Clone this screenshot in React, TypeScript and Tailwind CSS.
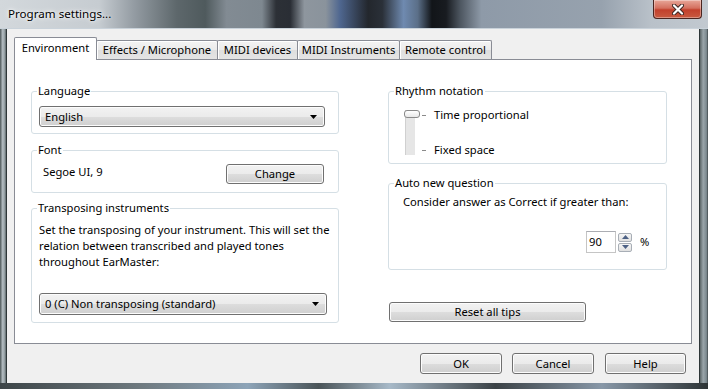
import type { ReactNode } from 'react'

const buttonFace =
  'bg-[linear-gradient(180deg,#f2f2f2_0%,#ebebeb_50%,#dddddd_51%,#cfcfcf_100%)] shadow-[inset_0_0_0_1px_#fcfcfc]'

function WinButton({ label, className }: { label: string; className: string }) {
  return (
    <div
      className={`flex items-center justify-center rounded-[3px] border border-[#707070] leading-[16px] text-black ${buttonFace} ${className}`}
    >
      {label}
    </div>
  )
}

function Combo({ value, className }: { value: string; className: string }) {
  return (
    <div
      className={`flex items-center justify-between rounded-[3px] border border-[#707070] pl-[5px] pr-[7px] leading-[16px] text-black ${buttonFace} ${className}`}
    >
      <span>{value}</span>
      <svg width="7" height="4" viewBox="0 0 7 4">
        <path d="M0 0h7L3.5 4z" fill="#000" />
      </svg>
    </div>
  )
}

function GroupBox({ title, className, children }: { title: string; className: string; children?: ReactNode }) {
  return (
    <div className={`relative rounded-[3px] border border-[#d5dfe5] ${className}`}>
      <span className="absolute left-[5px] top-[-9px] bg-white px-px leading-[16px]">{title}</span>
      {children}
    </div>
  )
}

const tabs = [
  { label: 'Effects / Microphone', width: 'w-[122px]' },
  { label: 'MIDI devices', width: 'w-[81px]' },
  { label: 'MIDI Instruments', width: 'w-[103px]' },
  { label: 'Remote control', width: 'w-[93px]' },
]

export default function App() {
  return (
    <div className="flex h-[389px] w-[708px] flex-col overflow-hidden bg-[linear-gradient(180deg,#7d8a90_0%,#5f6c70_40%,#44524f_70%,#6b7680_100%)] font-['Noto_Sans',sans-serif] text-[11.2px] text-black">
      {/* title bar */}
      <div className="relative flex h-[29px] shrink-0 items-center border-b border-[#c9d2da] bg-[linear-gradient(90deg,#d3d8dc_0%,#c6ccd1_14%,#939ba2_19%,#5d676b_25%,#4f5a5d_29%,#828b93_32%,#7e8890_37%,#2c3036_39%,#2a2e35_41%,#8e969e_43%,#8a939c_46%,#4f6790_48%,#23272d_52%,#2a3038_54%,#6f8ab0_57%,#5b6f88_59%,#121519_61%,#181b20_63%,#4d5660_65%,#8e9aa8_68%,#97a2ae_85%,#b9c1c9_92%,#c2c9d0_100%)] pl-[8px]">
        <span className="relative z-10 text-[11.6px] leading-[16px] text-black [text-shadow:0_0_6px_#ffffff,0_0_3px_#ffffff]">
          Program settings...
        </span>
        <div className="absolute right-[6px] top-0 flex h-[19px] w-[49px] items-center justify-center rounded-b-[4px] border border-t-0 border-[#4a2520] bg-[linear-gradient(180deg,#e8a799_0%,#d4705f_45%,#c2402c_55%,#c85a40_100%)] shadow-[inset_0_0_0_1px_rgba(255,255,255,0.35)]">
          <svg width="12" height="11" viewBox="0 0 12 11">
            <path d="M2 1.5L10 9.5M10 1.5L2 9.5" stroke="#3a2420" strokeWidth="4" strokeLinecap="round" />
            <path d="M2 1.5L10 9.5M10 1.5L2 9.5" stroke="#ffffff" strokeWidth="2.2" strokeLinecap="round" />
          </svg>
        </div>
      </div>

      <div className="flex min-h-0 flex-1">
        <div className="w-[7px] shrink-0 border-r border-[#2e3638] bg-[linear-gradient(90deg,#4b5556_0%,#b6bfc4_45%,#8f9a9e_80%,#5b6567_100%)]" />

        {/* client area */}
        <div className="flex h-[354px] w-[693px] flex-col border-r border-[#2e3638] bg-[#f0f0f0] pl-[7px] pr-[7px] pt-[8px]">
          {/* tab strip */}
          <div className="flex h-[22px] items-end">
            <div className="relative z-10 mb-[-1px] flex h-[23px] w-[83px] justify-center rounded-t-[2px] border border-b-0 border-[#898c95] bg-white pt-[2px] leading-[16px]">
              Environment
            </div>
            {tabs.map((tab) => (
              <div
                key={tab.label}
                className={`-ml-px flex h-[19px] justify-center rounded-t-[2px] border border-b-0 border-[#898c95] bg-[linear-gradient(180deg,#f3f3f3_0%,#ebebeb_50%,#dedede_51%,#e4e4e4_100%)] pt-[1px] leading-[16px] shadow-[inset_0_1px_0_#ffffff,inset_1px_0_0_#ffffff] ${tab.width}`}
              >
                {tab.label}
              </div>
            ))}
          </div>

          {/* tab page */}
          <div className="flex h-[285px] border border-[#898c95] bg-white pl-[16px] pt-[31px]">
            <div className="flex w-[308px] flex-col">
              <GroupBox title="Language" className="h-[43px] pl-[7px] pt-[14px]">
                <Combo value="English" className="h-[21px] w-[286px]" />
              </GroupBox>

              <GroupBox title="Font" className="mt-[16px] flex h-[43px] items-start pl-[11px] pr-[14px] pt-[13px]">
                <span className="leading-[16px]">Segoe UI, 9</span>
                <WinButton label="Change" className="ml-auto h-[20px] w-[98px]" />
              </GroupBox>

              <GroupBox title="Transposing instruments" className="mt-[15px] h-[115px] pl-[7px] pt-[13px]">
                <p className="whitespace-nowrap leading-[16px]">
                  Set the transposing of your instrument. This will set the
                  <br />
                  relation between transcribed and played tones
                  <br />
                  throughout EarMaster:
                </p>
                <Combo value="0 (C) Non transposing (standard)" className="mt-[23px] h-[22px] w-[288px]" />
              </GroupBox>
            </div>

            <div className="ml-[49px] flex w-[279px] flex-col">
              <GroupBox title="Rhythm notation" className="flex h-[73px] items-start pl-[15px] pt-[15px]">
                <div className="relative mt-[3px] h-[45px] w-[16px]">
                  <div className="ml-px h-full w-[10px] border-l border-[#d0d0d0] bg-[#e6e6e6]" />
                  <div className="absolute left-0 top-0 h-[8px] w-[16px] rounded-[3px] border border-[#8a8a8a] bg-[linear-gradient(180deg,#ffffff_0%,#e8e8e8_100%)]" />
                </div>
                <div className="ml-[2px] flex flex-col gap-[19px]">
                  <div className="flex items-center leading-[16px]">
                    <span className="mr-[8px] h-px w-[4px] bg-[#8a8a8a]" />
                    Time proportional
                  </div>
                  <div className="flex items-center leading-[16px]">
                    <span className="mr-[8px] h-px w-[4px] bg-[#8a8a8a]" />
                    Fixed space
                  </div>
                </div>
              </GroupBox>

              <GroupBox title="Auto new question" className="mt-[19px] h-[87px] pl-[14px] pt-[10px]">
                <p className="leading-[16px]">Consider answer as Correct if greater than:</p>
                <div className="ml-[183px] mt-[21px] flex items-center">
                  <div className="flex h-[22px] w-[30px] items-center border border-[#c5c5c5] border-t-[#abadb3] pl-[2px] leading-[16px]">
                    90
                  </div>
                  <div className="ml-[2px] flex flex-col gap-px">
                    <div className="flex h-[9px] w-[14px] items-center justify-center rounded-[2px] border border-[#a8aeb6] bg-[linear-gradient(180deg,#f6f6f6_0%,#e0e0e0_100%)]">
                      <svg width="7" height="4" viewBox="0 0 7 4">
                        <path d="M0 4h7L3.5 0z" fill="#4d6185" />
                      </svg>
                    </div>
                    <div className="flex h-[9px] w-[14px] items-center justify-center rounded-[2px] border border-[#a8aeb6] bg-[linear-gradient(180deg,#f6f6f6_0%,#e0e0e0_100%)]">
                      <svg width="7" height="4" viewBox="0 0 7 4">
                        <path d="M0 0h7L3.5 4z" fill="#4d6185" />
                      </svg>
                    </div>
                  </div>
                  <span className="ml-[8px] leading-[16px]">%</span>
                </div>
              </GroupBox>

              <WinButton label="Reset all tips" className="ml-px mt-[32px] h-[20px] w-[197px]" />
            </div>
          </div>

          {/* dialog buttons */}
          <div className="mt-[9px] flex justify-end gap-[10px] pr-[6px]">
            <WinButton label="OK" className="h-[21px] w-[82px]" />
            <WinButton label="Cancel" className="h-[21px] w-[82px]" />
            <WinButton label="Help" className="ml-px h-[21px] w-[81px]" />
          </div>
        </div>

        <div className="w-[8px] shrink-0 bg-[linear-gradient(90deg,#5b6567_0%,#9aa5aa_40%,#7d8a90_80%,#3e474a_100%)]" />
      </div>

      {/* bottom frame */}
      <div className="h-[6px] shrink-0 bg-[linear-gradient(90deg,#3d4548_0%,#6f7a80_20%,#8da4b8_35%,#4a5458_45%,#a7b9c8_55%,#3b4246_70%,#8898a8_85%,#2e3436_100%)]" />
    </div>
  )
}
